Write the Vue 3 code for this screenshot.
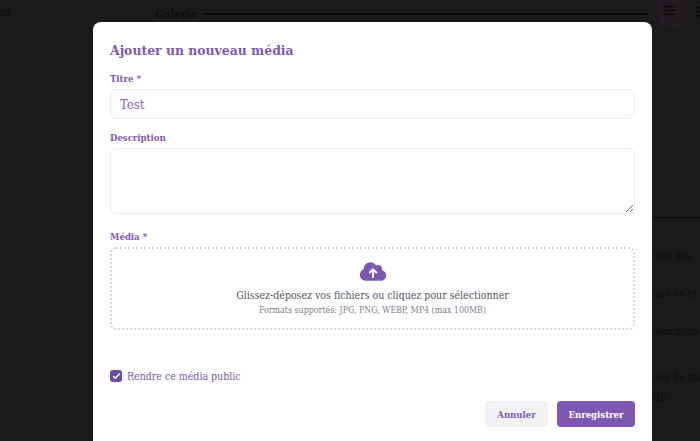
<script setup>
const rows = [
  { text: 'Couleur des', gap: 'r1' },
  { text: 'Mailles en cr', gap: 'r2 p2' },
  { text: 'Mensuration', gap: 'r2 p4' },
  { text: 'Moyen de pa', gap: 'r3 p4' },
  { text: 'CHF', gap: 'r4 p11' },
]
</script>

<template>
  <div class="page">
    <div class="top">
      <span class="crumb">m</span>
      <span class="gal">Galerie</span>
      <span class="rule"></span>
      <span class="iconbtn">
        <svg width="12" height="11" viewBox="0 0 12 11"><path d="M0 1.500h12M0 5.500h12M0 9.500h12" stroke="#0c0c0c" stroke-width="2"/></svg>
      </span>
      <span class="iconbtn2">
        <svg width="4" height="11" viewBox="0 0 4 11"><path d="M0 1.500h4M0 5.500h4M0 9.500h4" stroke="#0c0c0c" stroke-width="2"/></svg>
      </span>
    </div>
    <div class="behind">
      <div class="sep"></div>
      <div v-for="r in rows" :key="r.text" :class="r.gap">{{ r.text }}</div>
    </div>
  </div>

  <div class="overlay">
    <form class="modal" @submit.prevent>
      <h2>Ajouter un nouveau média</h2>

      <label class="lab first">Titre *</label>
      <input class="inp" type="text" value="Test" />

      <label class="lab second">Description</label>
      <textarea class="area"></textarea>

      <label class="lab third">Média *</label>
      <div class="drop">
        <svg class="cloud" width="28" height="21" viewBox="0 0 640 512" aria-hidden="true">
          <path fill="#7e57b2" d="M144 480C64.500 480 0 415.500 0 336c0-62.800 40.200-116.200 96.200-135.900-.1-2.700-.2-5.400-.2-8.100 0-88.400 71.600-160 160-160 59.300 0 111 32.200 138.700 80.200C409.900 102 428.300 96 448 96c53 0 96 43 96 96 0 12.200-2.300 23.800-6.400 34.600C596 238.400 640 290.100 640 352c0 70.700-57.300 128-128 128H144zm79-217c-9.400 9.400-9.400 24.600 0 33.900s24.600 9.400 33.900 0l39-39V392c0 13.300 10.700 24 24 24s24-10.700 24-24V257.900l39 39c9.400 9.400 24.600 9.400 33.900 0s9.400-24.600 0-33.900l-80-80c-9.400-9.400-24.600-9.400-33.900 0l-80 80z"/>
        </svg>
        <p class="d1">Glissez-déposez vos fichiers ou cliquez pour sélectionner</p>
        <p class="d2">Formats supportés: JPG, PNG, WEBP, MP4 (max 100MB)</p>
      </div>

      <div class="check">
        <span class="box">
          <svg width="9" height="8" viewBox="0 0 9 8"><path d="M1.200 4.200 3.400 6.300 7.800 1.600" fill="none" stroke="#fff" stroke-width="1.500"/></svg>
        </span>
        <span class="chk">Rendre ce média public</span>
      </div>

      <div class="actions">
        <button type="button" class="btn cancel">Annuler</button>
        <button type="submit" class="btn save">Enregistrer</button>
      </div>
    </form>
  </div>
</template>

<style>
html, body { margin: 0; height: 100%; overflow: hidden; background: #1a1a1a; }
</style>

<style scoped>
.page {
  height: 441px;
  overflow: hidden;
  background: #1a1a1a;
  color: #0d0d0d;
  font: 11.500px/16px "DejaVu Serif Condensed", "DejaVu Serif", serif;
  filter: blur(0.5px);
}
.top {
  display: flex;
  align-items: center;
  height: 28px;
}
.crumb { width: 155px; flex: none; margin-top: -5px; }
.gal { font-weight: 700; width: 48px; flex: none; }
.rule { width: 445px; flex: none; border-top: 2px solid #0a0a0a; }
.iconbtn {
  margin-left: 10px;
  flex: none;
  width: 22px;
  height: 28px;
  border-radius: 0 0 6px 6px;
  background: #221a21;
  display: flex;
  align-items: flex-start;
  justify-content: center;
  padding-top: 5px;
  box-sizing: border-box;
}
.iconbtn2 { margin-left: 16px; margin-top: -6px; flex: none; display: flex; }
.behind { margin-left: 634px; width: 66px; white-space: nowrap; font-size: 10.400px; }
.sep { margin-top: 189px; border-top: 1px solid #0a0a0a; }
.r1 { margin-top: 29px; }
.r2 { margin-top: 22px; }
.r3 { margin-top: 30px; }
.r4 { margin-top: 4px; }
.p2 { padding-left: 2px; }
.p4 { padding-left: 4px; }
.p11 { padding-left: 11px; }

.overlay {
  position: fixed;
  inset: 0;
  overflow: hidden;
}
.modal {
  width: 559px;
  height: 440px;
  margin: 22px 0 0 93px;
  box-sizing: border-box;
  padding: 19px 17px 0;
  background: #fff;
  border-radius: 8px;
  display: flex;
  flex-direction: column;
  font-family: "DejaVu Serif Condensed", "DejaVu Serif", serif;
  color: #7e57b2;
}
h2 {
  margin: 0;
  font-size: 13.800px;
  line-height: 18px;
  font-weight: 700;
  color: #7e57b2;
}
.lab { font-size: 9.500px; line-height: 14px; font-weight: 700; display: block; }
.first { margin-top: 13px; }
.second { margin-top: 12px; }
.third { margin-top: 16px; }
.inp, .area {
  display: block;
  box-sizing: border-box;
  width: 525px;
  border: 1px solid #eeeef1;
  border-radius: 6px;
  background: #fff;
  font: 13px "DejaVu Serif Condensed", "DejaVu Serif", serif;
  color: #8560b6;
  outline: none;
}
.inp { height: 30px; padding: 0 9px; margin-top: 3px; }
.area { height: 66px; resize: vertical; padding: 8px 9px; margin-top: 3px; }
.drop {
  margin-top: 3px;
  width: 525px;
  height: 83px;
  box-sizing: border-box;
  border: 2px dotted #d2d2d7;
  border-radius: 6px;
  display: flex;
  flex-direction: column;
  align-items: center;
  padding-top: 12px;
}
.cloud { display: block; }
.d1 { margin: 6px 0 0; font-size: 10.500px; line-height: 14px; color: #4f5560; }
.d2 { margin: 2px 0 0; font-size: 8.800px; line-height: 12px; color: #7b808a; }
.check { display: flex; align-items: center; gap: 5px; margin-top: 39px; }
.box {
  width: 12px;
  height: 12px;
  border-radius: 3px;
  background: #6f4ba8;
  display: flex;
  align-items: center;
  justify-content: center;
}
.chk { font-size: 10.500px; line-height: 14px; }
.actions { display: flex; justify-content: flex-end; gap: 9px; margin-top: 18px; }
.btn {
  height: 26px;
  border: 0;
  border-radius: 4px;
  font: 700 9.500px "DejaVu Serif Condensed", "DejaVu Serif", serif;
  padding: 0;
}
.cancel { width: 63px; background: #f2f2f6; color: #7e57b2; }
.save { width: 78px; background: #7e57b2; color: #fff; }
</style>
